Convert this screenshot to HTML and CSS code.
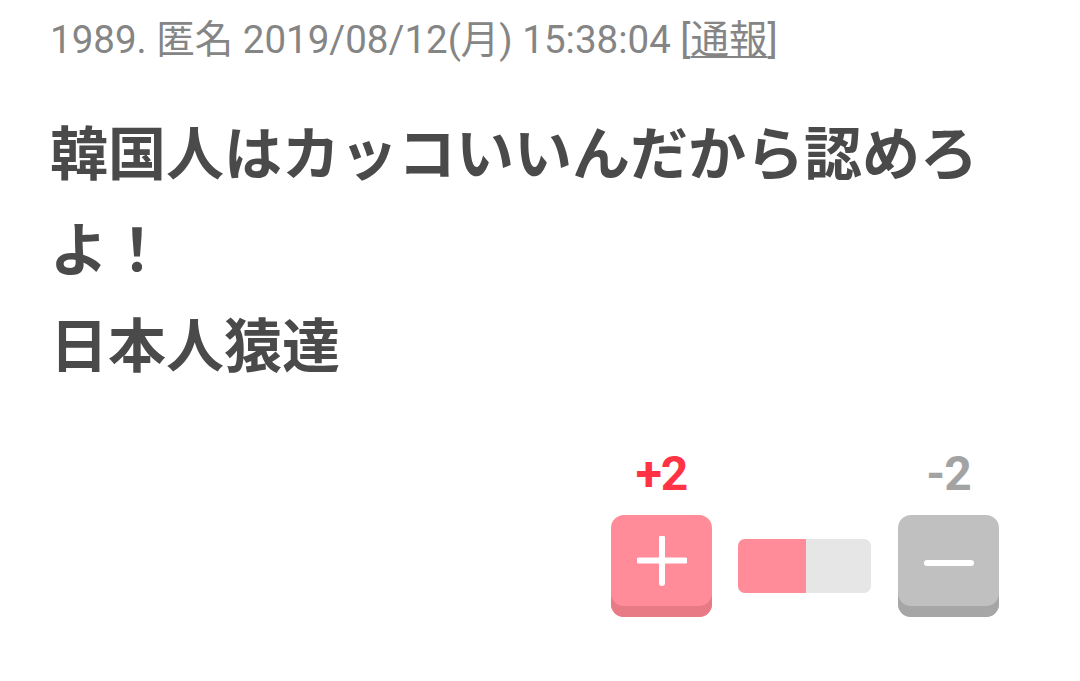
FILE: index.html
```html
<!DOCTYPE html>
<html lang="ja">
<head>
<meta charset="utf-8">
<link rel="stylesheet" href="styles.css">
</head>
<body>
<div class="comment">
  <div class="meta">1989. 匿名 2019/08/12(月) 15:38:04 [<a class="report" href="#">通報</a>]</div>
  <div class="body">韓国人はカッコいいんだから認めろよ！<br>日本人猿達</div>
  <div class="votes">
    <div class="vote-col">
      <div class="count plus-count">+2</div>
      <div class="btn btn-plus">
        <svg width="50" height="50" viewBox="0 0 50 50"><path d="M25 2 V47 M2 24.5 H48" stroke="#fff" stroke-width="6" stroke-linecap="round" fill="none"/></svg>
      </div>
    </div>
    <div class="bar"><div class="bar-fill" style="width:51%"></div></div>
    <div class="vote-col">
      <div class="count minus-count">-2</div>
      <div class="btn btn-minus">
        <svg width="50" height="50" viewBox="0 0 50 50"><path d="M3 27 H47" stroke="#fff" stroke-width="6" stroke-linecap="round" fill="none"/></svg>
      </div>
    </div>
  </div>
</div>
</body>
</html>
```

FILE: styles.css
```css
html, body {
  margin: 0;
  padding: 0;
  background: #ffffff;
}
body {
  font-family: Roboto, "Noto Sans CJK JP", sans-serif;
}
.comment {
  padding: 18px 0 0 50px;
}
.meta {
  font-size: 38.5px;
  line-height: 44px;
  color: #858585;
  white-space: nowrap;
}
.report {
  color: #858585;
  text-decoration: underline;
  text-underline-offset: 3px;
  text-decoration-thickness: 2px;
}
.body {
  margin-top: 40px;
  width: 960px;
  font-family: "Noto Sans CJK JP", sans-serif;
  font-weight: 700;
  font-size: 58px;
  line-height: 96px;
  color: #4a4a4a;
}
.votes {
  display: flex;
  justify-content: flex-end;
  align-items: flex-end;
  margin-top: 60px;
  margin-right: 81px;
}
.vote-col {
  display: flex;
  flex-direction: column;
  align-items: center;
  width: 101px;
}
.count {
  font-family: Roboto, sans-serif;
  font-weight: 700;
  font-size: 48px;
  line-height: 48px;
  height: 48px;
  letter-spacing: -1px;
}
.plus-count {
  color: #ff3344;
}
.minus-count {
  color: #a3a3a3;
}
.btn {
  margin-top: 17px;
  width: 101px;
  height: 102px;
  border-radius: 13px;
  display: flex;
  align-items: center;
  justify-content: center;
  padding-bottom: 11px;
  box-sizing: border-box;
}
.btn-plus {
  background: #ff8c98;
  box-shadow: inset 0 -11px 0 #e87a86;
}
.btn-minus {
  background: #c0c0c0;
  box-shadow: inset 0 -11px 0 #a6a6a6;
}
.bar {
  width: 133px;
  height: 54px;
  margin: 0 27px 24px 26px;
  border-radius: 7px;
  background: #e6e6e6;
  overflow: hidden;
  display: flex;
}
.bar-fill {
  height: 100%;
  background: #ff8c98;
}
```
